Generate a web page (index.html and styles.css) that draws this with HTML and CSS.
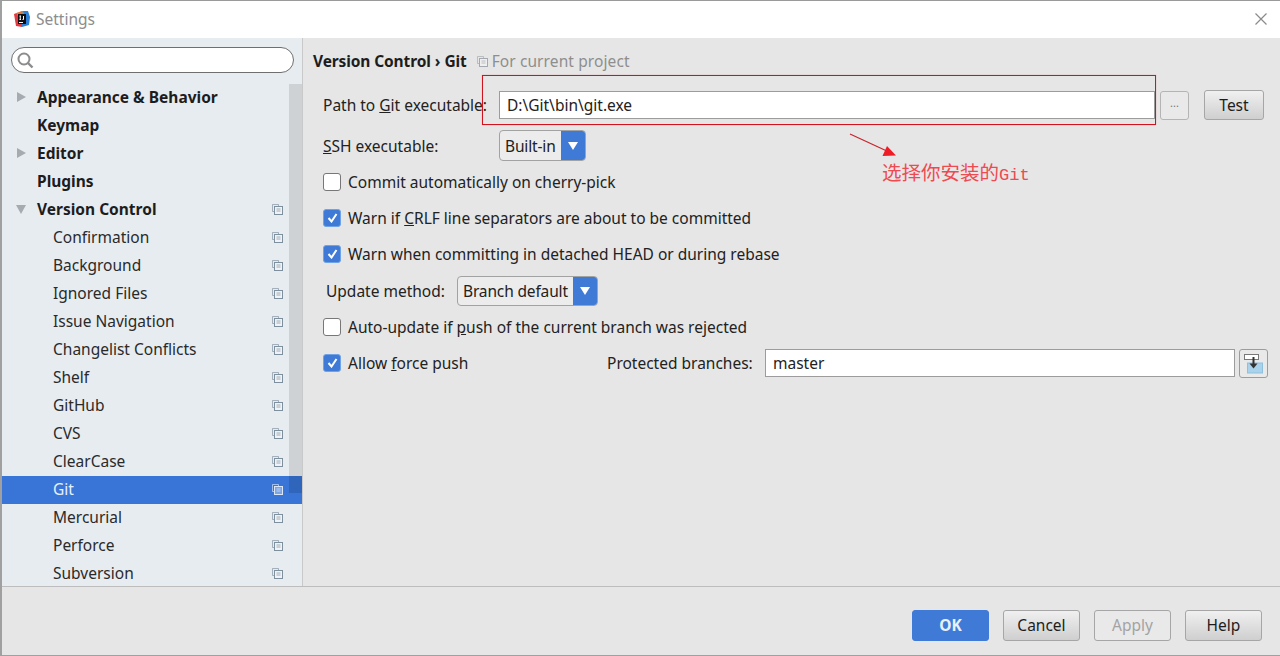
FILE: index.html
```html
<!DOCTYPE html>
<html lang="en">
<head>
<meta charset="utf-8">
<title>Settings</title>
<link rel="stylesheet" href="styles.css">
</head>
<body>
<svg class="defs" width="0" height="0" aria-hidden="true">
  <symbol id="copy" viewBox="0 0 11 11">
    <path d="M.5 .5h6v1.500M.5 .5v7H2" fill="none" stroke="currentColor" stroke-opacity=".65"/>
    <rect x="2.500" y="2.500" width="8" height="8" fill="#fff" fill-opacity=".35" stroke="currentColor"/>
    <path d="M4.500 5h4M4.500 7h4" stroke="currentColor" stroke-opacity=".7"/>
  </symbol>
</svg>
<div class="window">
  <header class="titlebar">
    <svg class="logo" width="16" height="16" viewBox="0 0 16 16">
      <path d="M0 3 8 0v16l-6-1z" fill="#e0393e"/>
      <path d="M8 0h6l2 6-1 8-7 2z" fill="#2b7fd6"/>
      <path d="M2 2 9 0l2 5-6 2z" fill="#f0a030" opacity=".55"/>
      <rect x="4" y="3" width="8" height="10" fill="#0d0d12"/>
      <rect x="5" y="11" width="4" height="1" fill="#fff"/>
      <path d="M5.500 5h1.500M6.250 5v3.500M5.500 8.500h1.500M9.500 5v3.500H8.500" stroke="#fff" fill="none"/>
    </svg>
    <span class="title">Settings</span>
    <svg class="close" width="14" height="14" viewBox="0 0 14 14"><path d="M1.500 1.500l11 11M12.500 1.500l-11 11" stroke="#8a8a8a" stroke-width="1.200"/></svg>
  </header>
  <div class="main">
    <aside class="sidebar">
      <div class="searchwrap">
        <div class="search">
          <svg width="17" height="17" viewBox="0 0 17 17"><circle cx="7" cy="7" r="5.500" fill="none" stroke="#8c8c8c" stroke-width="2"/><path d="M11 11l4.500 4.500" stroke="#8c8c8c" stroke-width="2.400"/></svg>
        </div>
      </div>
      <div class="tree">
        <div class="thumb"></div>
        <div class="row top"><span class="tri right"></span><span>Appearance &amp; Behavior</span></div>
        <div class="row top"><span>Keymap</span></div>
        <div class="row top"><span class="tri right"></span><span>Editor</span></div>
        <div class="row top"><span>Plugins</span></div>
        <div class="row top"><span class="tri down"></span><span>Version Control</span><svg class="copy"><use href="#copy"/></svg></div>
        <div class="row sub"><span>Confirmation</span><svg class="copy"><use href="#copy"/></svg></div>
        <div class="row sub"><span>Background</span><svg class="copy"><use href="#copy"/></svg></div>
        <div class="row sub"><span>Ignored Files</span><svg class="copy"><use href="#copy"/></svg></div>
        <div class="row sub"><span>Issue Navigation</span><svg class="copy"><use href="#copy"/></svg></div>
        <div class="row sub"><span>Changelist Conflicts</span><svg class="copy"><use href="#copy"/></svg></div>
        <div class="row sub"><span>Shelf</span><svg class="copy"><use href="#copy"/></svg></div>
        <div class="row sub"><span>GitHub</span><svg class="copy"><use href="#copy"/></svg></div>
        <div class="row sub"><span>CVS</span><svg class="copy"><use href="#copy"/></svg></div>
        <div class="row sub"><span>ClearCase</span><svg class="copy"><use href="#copy"/></svg></div>
        <div class="row sub selected"><span>Git</span><svg class="copy"><use href="#copy"/></svg><i class="thumb-sel"></i></div>
        <div class="row sub"><span>Mercurial</span><svg class="copy"><use href="#copy"/></svg></div>
        <div class="row sub"><span>Perforce</span><svg class="copy"><use href="#copy"/></svg></div>
        <div class="row sub"><span>Subversion</span><svg class="copy"><use href="#copy"/></svg></div>
      </div>
    </aside>
    <section class="content">
      <div class="crumbs"><b>Version Control</b><span class="sep">›</span><b>Git</b><svg class="copy crumbcopy"><use href="#copy"/></svg><span class="project">For current project</span></div>
      <div class="form">
        <div class="line path">
          <label class="lbl-path">Path to <u>G</u>it executable:</label>
          <div class="input wide">D:\Git\bin\git.exe</div>
          <button class="browse">...</button>
          <button class="btn test">Test</button>
        </div>
        <div class="line ssh">
          <label class="lbl-ssh"><u>S</u>SH executable:</label>
          <div class="select"><span class="val">Built-in</span><span class="arrow"></span></div>
        </div>
        <div class="line check"><span class="box"></span><span>Commit automatically on cherry-pick</span></div>
        <div class="line check"><span class="box on"><svg width="11" height="10" viewBox="0 0 11 10"><path d="M1.500 5l3 3.500L9.500 1" fill="none" stroke="#fff" stroke-width="2"/></svg></span><span>Warn if <u>C</u>RLF line separators are about to be committed</span></div>
        <div class="line check"><span class="box on"><svg width="11" height="10" viewBox="0 0 11 10"><path d="M1.500 5l3 3.500L9.500 1" fill="none" stroke="#fff" stroke-width="2"/></svg></span><span>Warn when committing in detached HEAD or during rebase</span></div>
        <div class="line update">
          <label class="lbl-update">Update method:</label>
          <div class="select"><span class="val">Branch default</span><span class="arrow"></span></div>
        </div>
        <div class="line check"><span class="box"></span><span>Auto-update if <u>p</u>ush of the current branch was rejected</span></div>
        <div class="line check force">
          <span class="box on"><svg width="11" height="10" viewBox="0 0 11 10"><path d="M1.500 5l3 3.500L9.500 1" fill="none" stroke="#fff" stroke-width="2"/></svg></span>
          <span class="forcelbl">Allow <u>f</u>orce push</span>
          <label class="lbl-prot">Protected branches:</label>
          <div class="input prot">master</div>
          <button class="iconbtn">
            <svg width="21" height="21" viewBox="0 0 21 21">
              <rect x="4.500" y="10" width="15" height="10" fill="#a9d3ec" stroke="#8fc0de"/>
              <rect x="1.500" y="1.500" width="14" height="5" fill="#fff" stroke="#777"/>
              <path d="M10.500 4v7" stroke="#333" stroke-width="2"/>
              <path d="M6.500 10.500h8l-4 5z" fill="#333"/>
            </svg>
          </button>
        </div>
      </div>
    </section>
  </div>
  <footer class="footer">
    <button class="btn primary">OK</button>
    <button class="btn">Cancel</button>
    <button class="btn disabled">Apply</button>
    <button class="btn">Help</button>
  </footer>
</div>
<div class="note-box"></div>
<svg class="note-arrow" width="50" height="26" viewBox="0 0 50 26"><path d="M1 1 40 19" stroke="#c8232c" stroke-width="1.200"/><path d="M47 22.500 33.500 23 38 13z" fill="#ee1c25"/></svg>
<div class="note-text">选择你安装的<span class="note-mono">Git</span></div>
</body>
</html>
```
FILE: styles.css
```css
* { box-sizing: border-box; }
html, body { margin: 0; padding: 0; }
body {
  width: 1280px;
  height: 656px;
  overflow: hidden;
  position: relative;
  font-family: "Noto Sans", "Open Sans", sans-serif;
  font-size: 15.5px;
  color: #222;
  background: #e6e6e6;
}
.defs { position: absolute; }
.window {
  display: flex;
  flex-direction: column;
  height: 656px;
  border-top: 1px solid #9a9a9a;
  border-left: 2px solid #a0a0a0;
  border-bottom: 1px solid #a0a0a0;
}
.titlebar {
  flex: none;
  height: 37px;
  background: #fff;
  display: flex;
  align-items: center;
  padding: 0 12px 2px 12px;
}
.title { margin-left: 6px; font-size: 15.500px; color: #8d8d8d; }
.close { margin-left: auto; }
.main { flex: 1; display: flex; min-height: 0; border-bottom: 1px solid #bdbdbd; }
.sidebar {
  flex: none;
  width: 301px;
  background: #e7ecf1;
  border-right: 1px solid #c9c9c9;
  display: flex;
  flex-direction: column;
  min-height: 0;
}
.searchwrap { flex: none; height: 46px; padding: 9px 8px 0 9px; }
.search {
  height: 26px;
  background: #fff;
  border: 1px solid #6f6f6f;
  border-radius: 13px;
  display: flex;
  align-items: center;
  padding-left: 5px;
}
.tree { position: relative; flex: 1; overflow: hidden; }
.thumb {
  position: absolute;
  top: 0;
  left: 287px;
  width: 13px;
  height: 409px;
  background: #ced2d5;
}
.row {
  position: relative;
  height: 28px;
  display: flex;
  align-items: center;
  padding-right: 19px;
  padding-bottom: 2px;
  white-space: nowrap;
}
.top { padding-left: 35px; font-weight: 700; color: #1d1d1d; }
.sub { padding-left: 51px; color: #2a2a2a; }
.tri { position: absolute; top: 8px; width: 0; height: 0; border-style: solid; border-color: transparent; }
.tri.right { left: 15px; border-width: 5.500px 0 5.500px 9px; border-left-color: #a5abb0; }
.tri.down { left: 14px; top: 9px; border-width: 9px 5.500px 0 5.500px; border-top-color: #a5abb0; }
.copy { width: 11px; height: 11px; margin-left: auto; color: #7e8f9e; flex: none; }
.selected { background: #3875d7; color: #e8f1fb; }
.selected .copy { color: #dbe7f7; }
.thumb-sel {
  position: absolute;
  top: 0;
  left: 287px;
  width: 13px;
  height: 17px;
  background: #2f65bb;
}
.content { flex: 1; padding: 13px 0 0 10px; min-width: 0; }
.crumbs { display: flex; align-items: center; height: 20px; }
.crumbs b { color: #1d1d1d; letter-spacing: -.12px; }
.sep { margin: 0 4px; font-weight: 700; }
.crumbcopy { margin: 0 4px 0 10px; color: #a3a9ae; }
.project { color: #8e8e8e; letter-spacing: .1px; }
.form { display: flex; flex-direction: column; padding-top: 19px; }
.line { display: flex; align-items: center; }
.path { height: 30px; }
.lbl-path { margin-left: 10px; width: 176px; white-space: nowrap; }
.input {
  height: 28px;
  background: #fff;
  border: 1px solid #9c9c9c;
  display: flex;
  align-items: center;
  padding-left: 7px;
  color: #222;
}
.wide { width: 656px; }
.browse {
  width: 29px;
  height: 29px;
  margin-left: 5px;
  padding: 0 0 6px;
  background: #e9e9e9;
  border: 1px solid #b4b4b4;
  border-radius: 3px;
  font: inherit;
  font-size: 11px;
  color: #777;
}
.btn {
  width: 77px;
  height: 31px;
  padding: 0 0 2px;
  font: inherit;
  color: #1d1d1d;
  border: 1px solid #a6a6a6;
  border-radius: 3px;
  background: linear-gradient(#f0f0f0, #cfcfcf);
}
.test { width: 60px; height: 30px; margin-left: 15px; padding: 0; }
.ssh { height: 31px; margin-top: 10px; }
.lbl-ssh { margin-left: 10px; width: 176px; }
.select {
  display: flex;
  height: 100%;
  border: 1px solid #a2a2a2;
  border-radius: 4px;
  background: #ececec;
  overflow: hidden;
}
.val { padding: 0 5px 0 5px; display: flex; align-items: center; white-space: nowrap; letter-spacing: -.15px; }
.arrow {
  width: 25px;
  margin: -1px -1px -1px 0;
  background: #3f7ad6;
  display: flex;
  align-items: center;
  justify-content: center;
}
.arrow::after {
  content: "";
  border-style: solid;
  border-color: #fff transparent transparent;
  border-width: 8px 5px 0;
}
.check { height: 36px; padding-left: 10px; white-space: nowrap; }
.ssh + .check { margin-top: 3px; }
.box {
  flex: none;
  width: 18px;
  height: 18px;
  margin-right: 7px;
  background: #fff;
  border: 1px solid #777;
  border-radius: 3px;
  display: flex;
  align-items: center;
  justify-content: center;
}
.box.on { background: #3f7ad6; border-color: #6fa3e6; }
.update { height: 30px; margin: 4px 0 0; }
.update + .check { margin-top: 3px; }
.lbl-update { margin-left: 13px; width: 131px; white-space: nowrap; }
.forcelbl { width: 259px; }
.lbl-prot { width: 158px; }
.prot { width: 470px; }
.iconbtn {
  width: 29px;
  height: 29px;
  margin-left: 4px;
  padding: 0;
  background: #e9e9e9;
  border: 1px solid #9c9c9c;
  border-radius: 3px;
  display: flex;
  align-items: center;
  justify-content: center;
}
.footer {
  flex: none;
  height: 68px;
  background: #e6e6e6;
  display: flex;
  justify-content: flex-end;
  gap: 14px;
  padding: 23px 18px 0 0;
}
.primary { background: #3f7ad6; border-color: #3f7ad6; color: #e8f1fb; font-weight: 700; }
.disabled { background: #e9e9e9; color: #a3a3a3; }
.note-box {
  position: absolute;
  left: 482px;
  top: 75px;
  width: 674px;
  height: 50px;
  border: 1px solid #d0141f;
  box-shadow: 0 0 1px rgba(230, 60, 60, .5);
}
.note-arrow { position: absolute; left: 849px; top: 133px; }
.note-text {
  position: absolute;
  left: 882px;
  top: 158px;
  font-family: "Noto Sans CJK SC", sans-serif;
  font-size: 19.500px;
  line-height: 27px;
  color: #ee4a50;
  white-space: nowrap;
}
.note-mono { font-family: "Liberation Mono", monospace; font-size: 17px; }
```
